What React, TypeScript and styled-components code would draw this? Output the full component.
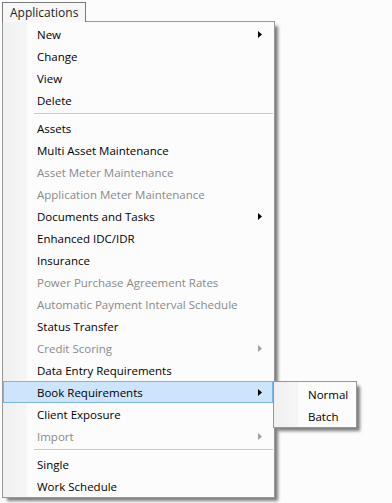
import styled, { createGlobalStyle } from "styled-components";

const GlobalStyle = createGlobalStyle`
  html, body {
    margin: 0;
    padding: 0;
    background: #fcfcfc;
  }
  body {
    font-family: "Open Sans", "Noto Sans", "DejaVu Sans", sans-serif;
    font-size: 11.5px;
    color: #000;
  }
`;

const Page = styled.div`
  width: 392px;
  height: 503px;
  padding: 2px 0 0 2px;
  box-sizing: border-box;
  overflow: hidden;
`;

const Tab = styled.div`
  position: relative;
  z-index: 2;
  width: 84px;
  height: 20px;
  box-sizing: border-box;
  border: 1px solid #7a7a7a;
  border-bottom: none;
  background: #f7f7f7;
  color: #1e1e1e;
  font-size: 12px;
  line-height: 19px;
  padding-left: 7px;
  margin-bottom: -1px;
`;

const Menu = styled.div<{ $width: number }>`
  position: relative;
  width: ${(p) => p.$width}px;
  box-sizing: border-box;
  border: 1px solid #979797;
  background: #fcfcfc;
  padding: 1px 0 0 0;
  box-shadow: 4px 4px 3px -1px rgba(0, 0, 0, 0.5);
  &::before {
    content: "";
    position: absolute;
    left: 0;
    top: 0;
    bottom: 0;
    width: 24px;
    background: linear-gradient(to right, #f0f0f0, #f6f6f6);
  }
`;

const Row = styled.div<{ $active?: boolean; $disabled?: boolean }>`
  position: relative;
  height: 22px;
  display: flex;
  align-items: center;
  box-sizing: border-box;
  margin-right: 1px;
  padding-left: 33px;
  padding-right: 10px;
  color: ${(p) => (p.$disabled ? "#8a8a8a" : "#000")};
  background: ${(p) => (p.$active ? "#cce4fc" : "transparent")};
  border: 1px solid ${(p) => (p.$active ? "#7ab4ec" : "transparent")};
`;

const Label = styled.span`
  position: relative;
  flex: 1;
  white-space: nowrap;
`;

const Separator = styled.div`
  position: relative;
  height: 6px;
  margin-left: 31px;
  margin-right: 1px;
  &::after {
    content: "";
    position: absolute;
    left: 0;
    right: 0;
    top: 2px;
    border-top: 1px solid #c8c8c8;
    border-bottom: 1px solid #fff;
  }
`;

const SubMenuBox = styled.div`
  position: absolute;
  z-index: 3;
  left: calc(100% + 1px);
  top: -1px;
`;

const Arrow = ({ disabled }: { disabled?: boolean }) => (
  <svg width="4" height="7" viewBox="0 0 4 7" style={{ position: "relative" }}>
    <polygon points="0,0 4,3.5 0,7" fill={disabled ? "#a0a0a0" : "#000"} />
  </svg>
);

type Item =
  | { sep: true }
  | { label: string; sub?: boolean; disabled?: boolean; active?: boolean };

const items: Item[] = [
  { label: "New", sub: true },
  { label: "Change" },
  { label: "View" },
  { label: "Delete" },
  { sep: true },
  { label: "Assets" },
  { label: "Multi Asset Maintenance" },
  { label: "Asset Meter Maintenance", disabled: true },
  { label: "Application Meter Maintenance", disabled: true },
  { label: "Documents and Tasks", sub: true },
  { label: "Enhanced IDC/IDR" },
  { label: "Insurance" },
  { label: "Power Purchase Agreement Rates", disabled: true },
  { label: "Automatic Payment Interval Schedule", disabled: true },
  { label: "Status Transfer" },
  { label: "Credit Scoring", sub: true, disabled: true },
  { label: "Data Entry Requirements" },
  { label: "Book Requirements", sub: true, active: true },
  { label: "Client Exposure" },
  { label: "Import", sub: true, disabled: true },
  { sep: true },
  { label: "Single" },
  { label: "Work Schedule" },
];

export default function App() {
  return (
    <Page>
      <GlobalStyle />
      <Tab>Applications</Tab>
      <Menu $width={273}>
        {items.map((it, i) =>
          "sep" in it ? (
            <Separator key={i} />
          ) : (
            <Row key={i} $active={it.active} $disabled={it.disabled}>
              <Label>{it.label}</Label>
              {it.sub && <Arrow disabled={it.disabled} />}
              {it.active && (
                <SubMenuBox>
                  <Menu $width={84}>
                    <Row>
                      <Label>Normal</Label>
                    </Row>
                    <Row>
                      <Label>Batch</Label>
                    </Row>
                  </Menu>
                </SubMenuBox>
              )}
            </Row>
          )
        )}
      </Menu>
    </Page>
  );
}
